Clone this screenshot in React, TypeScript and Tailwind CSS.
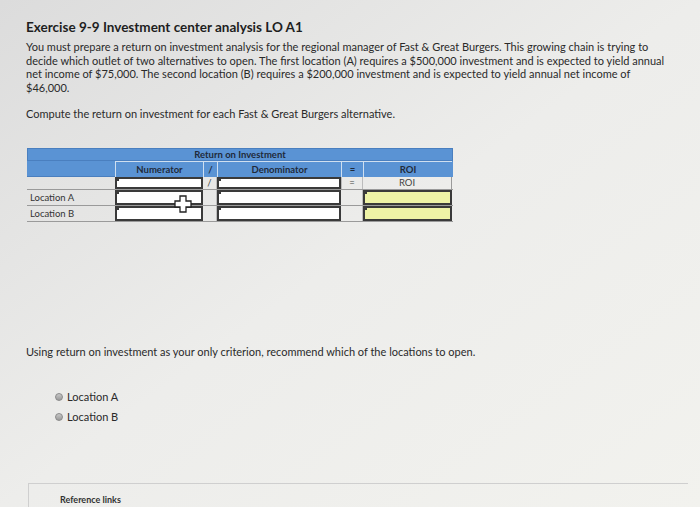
import React from 'react'

const lines = [
  'You must prepare a return on investment analysis for the regional manager of Fast & Great Burgers. This growing chain is trying to',
  'decide which outlet of two alternatives to open. The first location (A) requires a $500,000 investment and is expected to yield annual',
  'net income of $75,000. The second location (B) requires a $200,000 investment and is expected to yield annual net income of',
  '$46,000.',
]

function Input({ yellow }: { yellow?: boolean }) {
  return (
    <div className={`relative h-full border-2 border-[#3a3a3a] ${yellow ? 'bg-[#eef3a6]' : 'bg-white'}`}>
      <span className="absolute left-0 top-0 w-[2px] h-[2px] bg-[#3a3a3a]" />
    </div>
  )
}

function Cursor() {
  return (
    <svg className="absolute left-[174px] top-[195px]" width="18" height="18" viewBox="0 0 18 18">
      <path d="M6 1h6v5h5v6h-5v5H6v-5H1V6h5z" fill="white" stroke="#222" strokeWidth="1.3" />
    </svg>
  )
}

export default function App() {
  const cols = 'grid grid-cols-[88px_88px_14px_124px_22px_89px]'
  return (
    <div className="relative w-[700px] h-[507px] overflow-hidden bg-gradient-to-br from-[#dcdcdc] via-[#ededeb] to-[#f2f2ee] font-['Lato',sans-serif] text-[#2a2a2a]">
      <div className="pt-[19px] pl-[26px]">
        <h1 className="text-[13.5px] leading-[16px] font-bold text-[#1e1e1e]">Exercise 9-9 Investment center analysis LO A1</h1>

        <div className="mt-[5px] text-[11px] leading-[13.5px]">
          {lines.map((l) => (
            <div key={l} className="whitespace-nowrap">{l}</div>
          ))}
        </div>

        <p className="mt-[13px] text-[11px] leading-[14px]">Compute the return on investment for each Fast & Great Burgers alternative.</p>

        <div className="mt-[27px] ml-px w-[426px] text-[9.5px] leading-[12px]">
          <div className="h-[13px] bg-[#5a93d4] border border-[#4a7fbf] flex items-center justify-center font-bold text-[#1f2a3a]">
            Return on Investment
          </div>
          <div className={`${cols} h-[16px] bg-[#5a93d4] font-bold text-[#1f2a3a]`}>
            <div className="border-b border-[#4a7fbf]" />
            <div className="border-l border-t border-[#cfdff0] flex items-center justify-center">Numerator</div>
            <div className="border-l border-t border-[#cfdff0] flex items-center justify-center">/</div>
            <div className="border-l border-t border-[#cfdff0] flex items-center justify-center">Denominator</div>
            <div className="border-l border-t border-[#cfdff0] flex items-center justify-center">=</div>
            <div className="border-l border-t border-[#cfdff0] flex items-center justify-center">ROI</div>
          </div>
          <div className={`${cols} h-[13px] border-b border-[#9a9a9a]`}>
            <div />
            <Input />
            <div className="border-r border-[#bcbcbc] flex items-center justify-center text-[#444]">/</div>
            <Input />
            <div className="border-x border-[#bcbcbc] flex items-center justify-center text-[#444]">=</div>
            <div className="border-r border-[#9a9a9a] flex items-center justify-center text-[#444]">ROI</div>
          </div>
          <div className={`${cols} h-[16px] border-b border-[#9a9a9a]`}>
            <div className="flex items-end pb-[1px] pl-[3px] text-[#333]">Location A</div>
            <Input />
            <div className="border-r border-[#bcbcbc]" />
            <Input />
            <div className="border-r border-[#bcbcbc]" />
            <Input yellow />
          </div>
          <div className={`${cols} h-[16px] border-b border-[#9a9a9a]`}>
            <div className="flex items-end pb-[1px] pl-[3px] text-[#333]">Location B</div>
            <Input />
            <div className="border-r border-[#bcbcbc]" />
            <Input />
            <div className="border-r border-[#bcbcbc]" />
            <Input yellow />
          </div>
        </div>

        <p className="mt-[123px] text-[11px] leading-[14px]">Using return on investment as your only criterion, recommend which of the locations to open.</p>

        <div className="mt-[31px] ml-[29px] flex flex-col gap-[6px] text-[11px] leading-[14px]">
          {['Location A', 'Location B'].map((t) => (
            <label key={t} className="flex items-center gap-[4px]">
              <span className="w-[8px] h-[8px] rounded-full bg-gradient-to-b from-[#c8c8c8] to-[#9a9a9a] border border-[#8a8a8a]" />
              {t}
            </label>
          ))}
        </div>

        <div className="mt-[59px] ml-[2px] w-[660px] h-[30px] border-t border-l border-[#cfcfcf] pt-[10px] pl-[31px] text-[9px] leading-[12px]">
          <span className="font-bold text-[#333]">Reference links</span>
        </div>
      </div>
      <Cursor />
    </div>
  )
}
